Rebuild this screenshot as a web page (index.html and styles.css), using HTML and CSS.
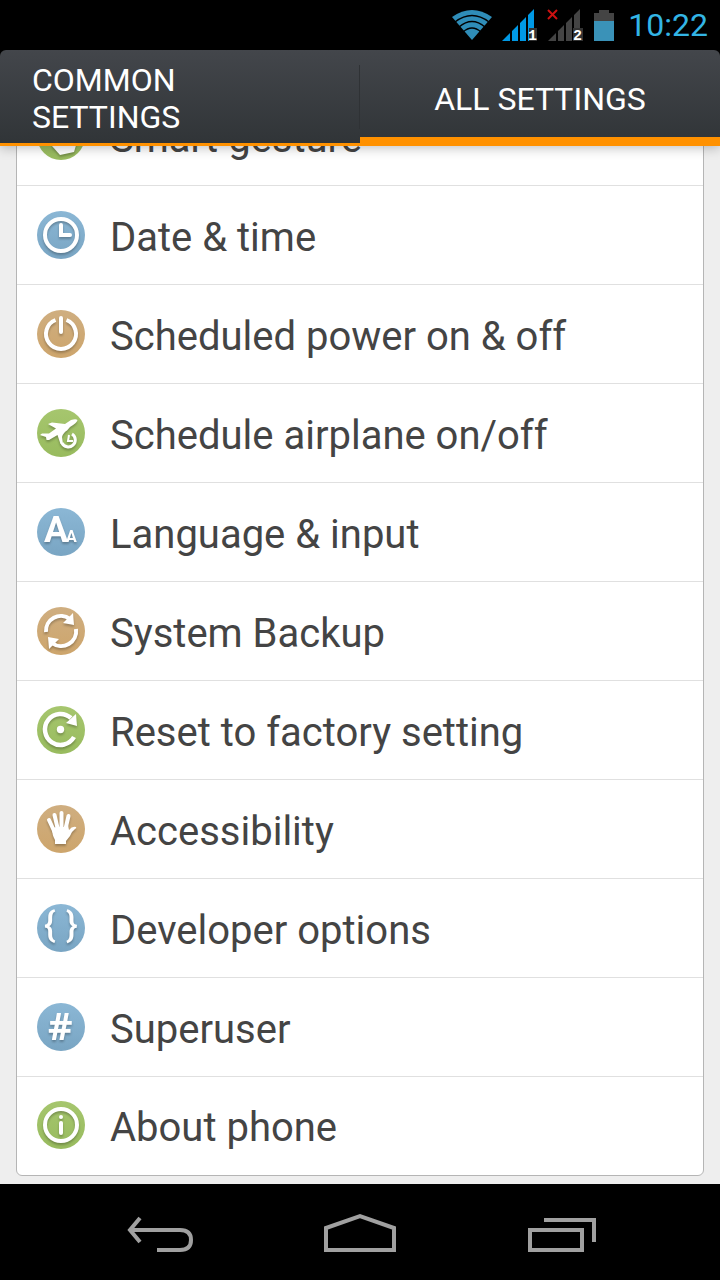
FILE: index.html
```html
<!DOCTYPE html>
<html lang="en">
<head>
  <meta charset="UTF-8" />
  <meta name="viewport" content="width=device-width, initial-scale=1.0"/>
  <title>Settings</title>
  <link rel="stylesheet" href="styles.css">
</head>
<body>

  <header class="status-bar">
    <svg class="wifi" width="40" height="32" viewBox="0 0 40 32" aria-hidden="true">
      <path d="M20 31L0 8Q20 -6 40 8Z" fill="#2f8db8"/>
      <g fill="none" stroke="#000" stroke-width="1.5">
        <path d="M3 13Q20 0 37 13"/>
        <path d="M7 18Q20 7 33 18"/>
        <path d="M11 23Q20 15 29 23"/>
      </g>
    </svg>
    <svg class="signal" width="36" height="32" viewBox="0 0 36 32" aria-hidden="true">
      <path d="M0 32L8 24V32ZM10 32V22L16 16V32ZM18 32V14L24 8V32ZM26 32V6L32 0V32Z" fill="#0099e5"/>
      <rect x="27" y="19" width="8" height="13" fill="#333"/>
      <text class="sim" x="26" y="31">1</text>
    </svg>
    <svg class="signal" width="36" height="32" viewBox="0 0 36 32" aria-hidden="true">
      <path d="M0 32L8 24V32ZM10 32V22L16 16V32ZM18 32V14L24 8V32ZM26 32V6L32 0V32Z" fill="#444"/>
      <path d="M0 1L9 10M9 1L0 10" stroke="#cc1111" stroke-width="2"/>
      <rect x="25" y="19" width="10" height="13" fill="#333"/>
      <text class="sim" x="25" y="31">2</text>
    </svg>
    <svg class="battery" width="20" height="31" viewBox="0 0 20 31" aria-hidden="true">
      <path d="M0 3H5V0H15V3H20V11H0Z" fill="#444"/>
      <rect y="11" width="20" height="20" fill="#3a92b8"/>
    </svg>
    <time class="clock">10:22</time>
  </header>

  <nav class="tabs">
    <button class="tab" type="button">COMMON<br>SETTINGS</button>
    <button class="tab active" type="button">ALL SETTINGS</button>
  </nav>

  <main class="content">
    <ul class="settings">
      <li>
        <a class="row" href="#gesture">
          <svg class="icon" viewBox="0 0 48 48" aria-hidden="true">
            <circle cx="24" cy="24" r="24" fill="url(#green)"/>
            <path class="shade" fill="#fff" d="M14 16L35 14L40 30L37 40L23 43L15 34Z"/>
          </svg>
          <span>Smart gesture</span>
        </a>
      </li>
      <li>
        <a class="row" href="#date">
          <svg class="icon" viewBox="0 0 48 48" aria-hidden="true">
            <circle cx="24" cy="24" r="24" fill="url(#blue)"/>
            <g class="line">
              <circle cx="24" cy="24" r="16"/>
              <path d="M24 14V24H33" stroke-linecap="round"/>
            </g>
          </svg>
          <span>Date &amp; time</span>
        </a>
      </li>
      <li>
        <a class="row" href="#power">
          <svg class="icon" viewBox="0 0 48 48" aria-hidden="true">
            <circle cx="24" cy="24" r="24" fill="url(#tan)"/>
            <g class="line">
              <path d="M18.5 10A15 15 0 1 0 29.5 10"/>
              <path d="M24 8V22" stroke-linecap="round"/>
            </g>
          </svg>
          <span>Scheduled power on &amp; off</span>
        </a>
      </li>
      <li>
        <a class="row" href="#airplane">
          <svg class="icon" viewBox="0 0 48 48" aria-hidden="true">
            <circle cx="24" cy="24" r="24" fill="url(#green)"/>
            <g class="shade">
              <path fill="#fff" d="M11 15L15 13.5L28 15L34 11Q39 9.5 40.5 11Q40 14 33 18L30 21.5Q26 24 25 28L26 35H23.5L20.5 26L12 31L9.5 31L9 28L3 26L5 24.5L12 24.5L19 19.5Z"/>
              <path fill="none" stroke="#fff" stroke-width="3" d="M35 25A7 7 0 1 1 25 34"/>
              <path fill="none" stroke="#fff" stroke-width="2" d="M32 26L31 32H36"/>
            </g>
          </svg>
          <span>Schedule airplane on/off</span>
        </a>
      </li>
      <li>
        <a class="row" href="#language">
          <svg class="icon" viewBox="0 0 48 48" aria-hidden="true">
            <circle cx="24" cy="24" r="24" fill="url(#blue)"/>
            <g class="glyph">
              <text x="7" y="34" font-size="36">A</text>
              <text x="29" y="34" font-size="16">A</text>
            </g>
          </svg>
          <span>Language &amp; input</span>
        </a>
      </li>
      <li>
        <a class="row" href="#backup">
          <svg class="icon" viewBox="0 0 48 48" aria-hidden="true">
            <circle cx="24" cy="24" r="24" fill="url(#tan)"/>
            <g class="shade">
              <path fill="none" stroke="#fff" stroke-width="4" d="M9 25A15 15 0 0 1 33 12M39 22A15 15 0 0 1 15 36"/>
              <path fill="#fff" d="M36 6L37 18L26 16ZM12 42L11 30L22 32Z"/>
            </g>
          </svg>
          <span>System Backup</span>
        </a>
      </li>
      <li>
        <a class="row" href="#reset">
          <svg class="icon" viewBox="0 0 48 48" aria-hidden="true">
            <circle cx="24" cy="24" r="24" fill="url(#green)"/>
            <g class="shade">
              <path fill="none" stroke="#fff" stroke-width="4.5" d="M37 31A15.5 15.5 0 1 1 34 12"/>
              <path fill="#fff" d="M39 8L40 20L29 17Z"/>
              <circle cx="23.5" cy="23.5" r="3.7" fill="#fff"/>
            </g>
          </svg>
          <span>Reset to factory setting</span>
        </a>
      </li>
      <li>
        <a class="row" href="#accessibility">
          <svg class="icon" viewBox="0 0 48 48" aria-hidden="true">
            <circle cx="24" cy="24" r="24" fill="url(#tan)"/>
            <g class="shade">
              <path fill="none" stroke="#fff" stroke-width="4" stroke-linecap="round" d="M12 15L18 28M17.5 10L21 25M24.5 8V25M31.5 11L28 26"/>
              <path fill="#fff" d="M15 23L20 22L28 22L31 20L32 25Q35 21 39 22Q40 23 38 24Q34 27 33 31L29 36V39H18V35Q15 30 15 23Z"/>
            </g>
          </svg>
          <span>Accessibility</span>
        </a>
      </li>
      <li>
        <a class="row" href="#developer">
          <svg class="icon" viewBox="0 0 48 48" aria-hidden="true">
            <circle cx="24" cy="24" r="24" fill="url(#blue)"/>
            <g class="glyph brace">
              <text x="7" y="33">{</text>
              <text x="29" y="33">}</text>
            </g>
          </svg>
          <span>Developer options</span>
        </a>
      </li>
      <li>
        <a class="row" href="#superuser">
          <svg class="icon" viewBox="0 0 48 48" aria-hidden="true">
            <circle cx="24" cy="24" r="24" fill="url(#blue)"/>
            <g class="glyph hash">
              <text x="11" y="37">#</text>
            </g>
          </svg>
          <span>Superuser</span>
        </a>
      </li>
      <li>
        <a class="row" href="#about">
          <svg class="icon" viewBox="0 0 48 48" aria-hidden="true">
            <circle cx="24" cy="24" r="24" fill="url(#green)"/>
            <g class="line">
              <circle cx="24" cy="24" r="16"/>
              <path d="M24 22V32" stroke-linecap="round"/>
              <path d="M24 16V16.1" stroke-linecap="round"/>
            </g>
          </svg>
          <span>About phone</span>
        </a>
      </li>
    </ul>
  </main>

  <footer class="nav-bar">
    <button type="button" aria-label="Back">
      <svg width="76" height="48" viewBox="0 0 76 48">
        <path d="M12 18H62Q73 18 73 28Q73 38 62 38H39M22 6L12 18L22 30"/>
      </svg>
    </button>
    <button type="button" aria-label="Home">
      <svg width="76" height="48" viewBox="0 0 76 48">
        <path d="M4 38V16L38 4L72 16V38Z"/>
      </svg>
    </button>
    <button type="button" aria-label="Recent apps">
      <svg width="76" height="48" viewBox="0 0 76 48">
        <path d="M4 18H56V38H4ZM18 8H68V30"/>
      </svg>
    </button>
  </footer>

  <!-- shared icon gradients -->
  <svg class="defs" width="0" height="0" aria-hidden="true">
    <defs>
      <linearGradient id="blue" x1="0" y1="0" x2="0" y2="1">
        <stop offset="0" stop-color="#8bb7d5"/>
        <stop offset="1" stop-color="#79a5c3"/>
      </linearGradient>
      <linearGradient id="tan" x1="0" y1="0" x2="0" y2="1">
        <stop offset="0" stop-color="#cfae80"/>
        <stop offset="1" stop-color="#cda56c"/>
      </linearGradient>
      <linearGradient id="green" x1="0" y1="0" x2="0" y2="1">
        <stop offset="0" stop-color="#a6c66e"/>
        <stop offset="1" stop-color="#98bb5e"/>
      </linearGradient>
    </defs>
  </svg>

</body>
</html>
```

FILE: styles.css
```css
* {
  box-sizing: border-box;
}
body {
  font-family: Roboto, 'Liberation Sans', sans-serif;
  background-color: #000;
  margin: 0;
  height: 100vh;
  display: flex;
  flex-direction: column;
}
button {
  font-family: inherit;
  border: none;
  cursor: pointer;
}

/* status bar */
.status-bar {
  height: 50px;
  flex-shrink: 0;
  display: flex;
  align-items: center;
  justify-content: flex-end;
  gap: 10px;
  padding: 0 12px;
}
.clock {
  color: #33b5e5;
  font-size: 32px;
  margin-left: 4px;
}
.signal {
  overflow: visible;
}
.sim {
  fill: #fff;
  font: bold 15px 'Liberation Mono', monospace;
}

/* tabs */
.tabs {
  display: flex;
  height: 96px;
  flex-shrink: 0;
  z-index: 1;
  background-image: linear-gradient(#43464b, #303437);
  border-radius: 6px 6px 0 0;
  box-shadow: 0 2px 12px rgba(0, 0, 0, 0.25);
}
.tab {
  flex: 1;
  padding: 5px 32px 0;
  background: none;
  color: white;
  font-size: 32px;
  line-height: 37px;
  text-align: left;
  border-bottom: 3px solid #ff9100;
}
.tab.active {
  text-align: center;
  padding-top: 11px;
  border-bottom-width: 9px;
}
.tab:first-child {
  background: linear-gradient(#2f3235, #2f3235) right center / 1px 64px no-repeat;
}

/* settings list */
.content {
  flex: 1;
  min-height: 0;
  overflow: hidden;
  display: flex;
  flex-direction: column;
  justify-content: flex-end;
  background-color: #eee;
  padding: 0 16px 8px;
}
.settings {
  list-style: none;
  margin: 0;
  padding: 0;
  background-color: white;
  border: 1px solid #b5b5b5;
  border-radius: 6px;
}
.row {
  display: flex;
  align-items: center;
  gap: 25px;
  height: 99px;
  padding: 0 20px;
  border-bottom: 1px solid #e0e0e0;
  color: #444;
  font-size: 40px;
  text-decoration: none;
}
.row span {
  padding-top: 4px;
}
li:last-child .row {
  height: 98px;
  padding-bottom: 2px;
  border-bottom: none;
}

/* round icons */
.icon {
  width: 48px;
  height: 48px;
  flex-shrink: 0;
}
.line, .glyph, .shade {
  filter: drop-shadow(0 2px 1px rgba(0, 0, 0, 0.25));
}
.line {
  fill: none;
  stroke: #fff;
  stroke-width: 4px;
}
.glyph {
  fill: #fff;
  font-weight: bold;
}
.brace {
  font-size: 35px;
  font-weight: 500;
}
.hash {
  font-size: 38px;
  font-family: 'Open Sans', sans-serif;
}

/* navigation bar */
.nav-bar {
  height: 96px;
  flex-shrink: 0;
  display: flex;
  justify-content: center;
  gap: 128px;
  align-items: center;
  padding-top: 8px;
}
.nav-bar button {
  background: none;
  padding: 0;
}
.nav-bar svg {
  display: block;
  fill: none;
  stroke: #a0a0a0;
  stroke-width: 4px;
}
.defs {
  position: absolute;
}
```
